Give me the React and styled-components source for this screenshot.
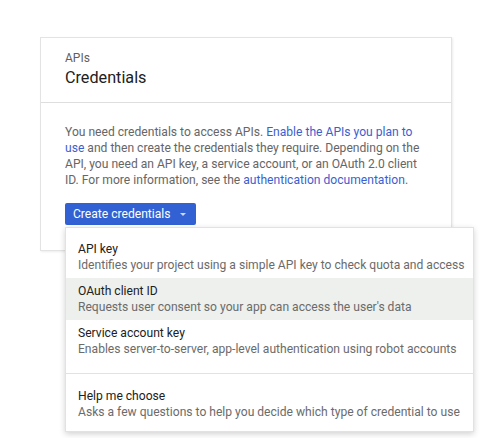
import React from 'react'
import styled, { createGlobalStyle } from 'styled-components'

const GlobalStyle = createGlobalStyle`
  body {
    margin: 0;
    background: #fff;
    font-family: Roboto, 'Liberation Sans', Arial, sans-serif;
    -webkit-font-smoothing: antialiased;
  }
`

const Page = styled.div`
  position: relative;
  width: 481px;
  height: 438px;
  padding: 37px 0 0 40px;
  box-sizing: border-box;
`

const Card = styled.section`
  width: 412px;
  box-sizing: border-box;
  background: #fff;
  border: 1px solid #e3e3e3;
  box-shadow: 1px 1px 2px rgba(0, 0, 0, 0.08);
`

const Header = styled.header`
  padding: 12px 24px 12px;
  border-bottom: 1px solid #dedede;
`

const Eyebrow = styled.div`
  font-size: 12px;
  line-height: 16px;
  color: #5f5f5f;
`

const Title = styled.h1`
  margin: 0;
  font-size: 16.2px;
  line-height: 24px;
  font-weight: 400;
  color: #212121;
`

const Body = styled.div`
  padding: 21px 24px 25px;
`

const Text = styled.p`
  margin: 0 0 15px;
  width: 362px;
  font-size: 12.1px;
  line-height: 16px;
  color: #666;
`

const Link = styled.a`
  color: #3b5fd0;
  text-decoration: none;
`

const Button = styled.button`
  display: inline-flex;
  align-items: center;
  gap: 9px;
  height: 22px;
  padding: 0 10px 0 8px;
  border: 0;
  border-radius: 2px;
  background: #3161d3;
  color: #fff;
  font-family: inherit;
  font-size: 12.1px;
  cursor: pointer;
`

const Caret = styled.span`
  width: 0;
  height: 0;
  border-left: 3.5px solid transparent;
  border-right: 3.5px solid transparent;
  border-top: 3.5px solid rgba(255, 255, 255, 0.75);
`

const Menu = styled.ul`
  position: absolute;
  left: 65px;
  top: 227px;
  width: 409px;
  margin: 0;
  padding: 8px 0 6px;
  box-sizing: border-box;
  list-style: none;
  background: #fff;
  border: 1px solid #e2e2e2;
  box-shadow: 0 2px 6px rgba(0, 0, 0, 0.18);
`

const Item = styled.li`
  padding: 5px 12px 5px;
  height: 42px;
  box-sizing: border-box;
  white-space: nowrap;
  background: ${(p) => (p.active ? '#edf0ed' : 'transparent')};
`

const ItemTitle = styled.div`
  font-size: 12.1px;
  line-height: 16px;
  color: #212121;
`

const ItemDesc = styled.div`
  font-size: 12.1px;
  line-height: 16px;
  color: #6b6b6b;
`

const Separator = styled.li`
  height: 1px;
  margin: 11px 0 9px;
  background: #e2e2e2;
`

const options = [
  { title: 'API key', desc: 'Identifies your project using a simple API key to check quota and access' },
  { title: 'OAuth client ID', desc: "Requests user consent so your app can access the user's data", active: true },
  { title: 'Service account key', desc: 'Enables server-to-server, app-level authentication using robot accounts' },
]

export default function App() {
  return (
    <Page>
      <GlobalStyle />
      <Card>
        <Header>
          <Eyebrow>APIs</Eyebrow>
          <Title>Credentials</Title>
        </Header>
        <Body>
          <Text>
            You need credentials to access APIs. <Link href="#">Enable the APIs you plan to use</Link> and then
            create the credentials they require. Depending on the API, you need an API key, a service account, or an
            OAuth 2.0 client ID. For more information, see the <Link href="#">authentication documentation</Link>.
          </Text>
          <Button>
            Create credentials
            <Caret />
          </Button>
        </Body>
      </Card>
      <Menu>
        {options.map((o) => (
          <Item key={o.title} active={o.active}>
            <ItemTitle>{o.title}</ItemTitle>
            <ItemDesc>{o.desc}</ItemDesc>
          </Item>
        ))}
        <Separator />
        <Item>
          <ItemTitle>Help me choose</ItemTitle>
          <ItemDesc>Asks a few questions to help you decide which type of credential to use</ItemDesc>
        </Item>
      </Menu>
    </Page>
  )
}
